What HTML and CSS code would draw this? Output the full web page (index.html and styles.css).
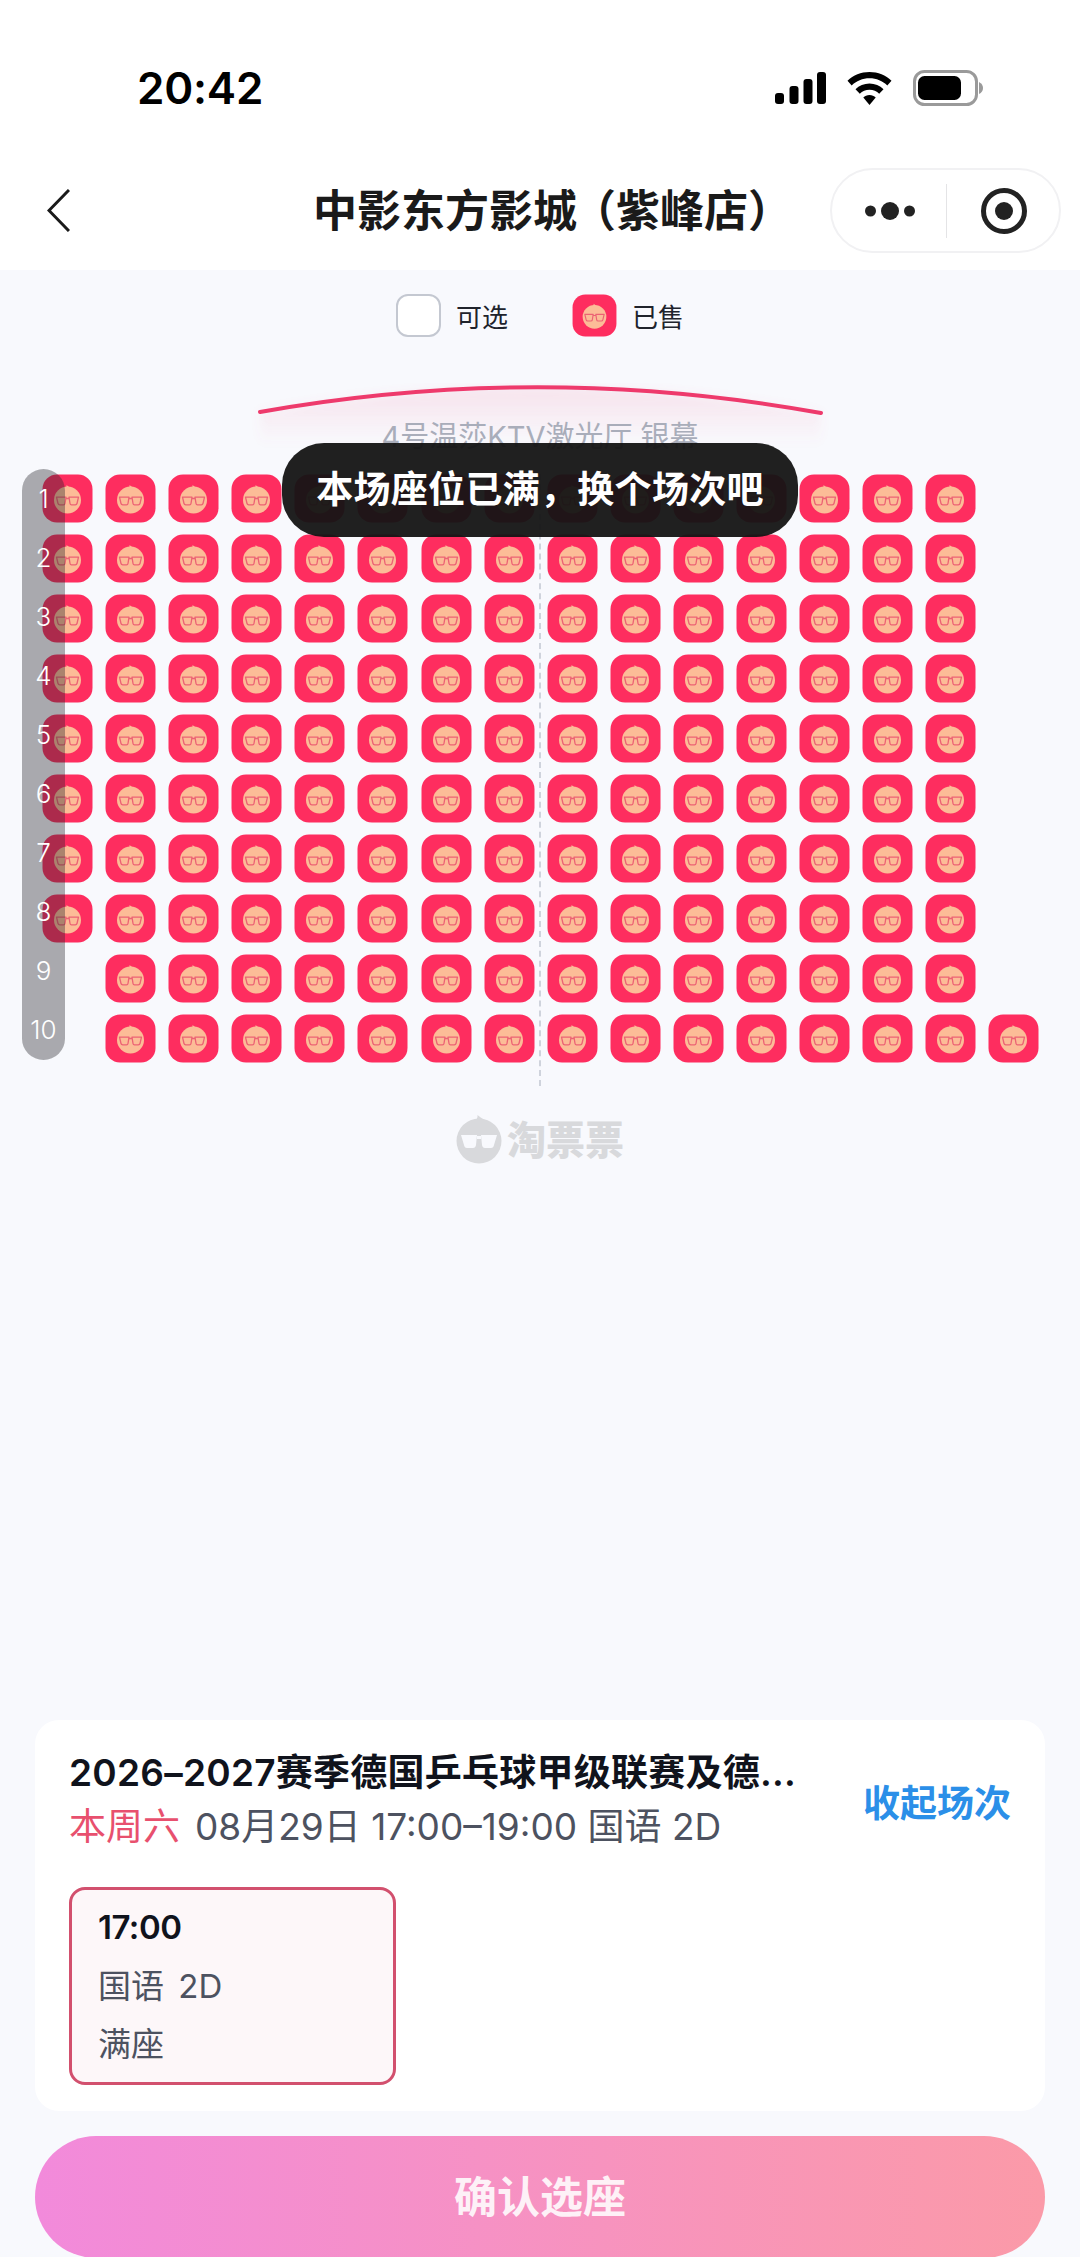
FILE: index.html
```html
<!DOCTYPE html>
<html lang="zh-CN">
<head>
<meta charset="utf-8">
<title>选座</title>
<link rel="stylesheet" href="styles.css">
</head>
<body>
<svg class="defs" aria-hidden="true">
  <defs>
    <symbol id="s" viewBox="0 0 51 49">
      <rect x="0.5" y="0.5" width="50" height="48" rx="14.500" fill="#fe2d5f"/>
      <path d="M20 16C23 15 25 13.500 24.500 11C26.500 12.500 29 14 31 17Z" fill="#fcbc97"/>
      <circle cx="25.500" cy="26" r="13.500" fill="#fcbc97"/>
      <path d="M14.500 23.200H24L23 29.500Q22.800 30.800 21.500 30.800H17.800Q16.300 30.800 16 29.500ZM27 23.200H36.500L35 29.500Q34.700 30.800 33.300 30.800H29.500Q28.200 30.800 28 29.500ZM24 24.500H27" fill="none" stroke="#ec6274" stroke-width="1.300" stroke-linejoin="round"/>
    </symbol>
  </defs>
</svg>
<div class="page">
  <header class="top">
    <div class="status">
      <span class="time">20:42</span>
      <div class="status-icons">
        <svg class="sig" width="51" height="32" viewBox="0 0 51 32"><rect x="0" y="21" width="9" height="11" rx="3"/><rect x="14.500" y="14" width="9" height="18" rx="3"/><rect x="28.500" y="7" width="9" height="25" rx="3"/><rect x="42" y="0" width="9" height="32" rx="3"/></svg>
        <svg class="wifi" width="45" height="33" viewBox="0 0 45 33"><path d="M22.500 0C31 0 38.800 3.300 44.500 8.800L40.300 13.400C35.700 9 29.400 6.300 22.500 6.300S9.300 9 4.700 13.400L.5 8.800C6.200 3.300 14 0 22.500 0Z"/><path d="M22.500 11.500C27.900 11.500 32.900 13.600 36.500 17.200L32.200 21.700C29.700 19.200 26.300 17.700 22.500 17.700S15.300 19.200 12.800 21.700L8.500 17.200C12.100 13.600 17.100 11.500 22.500 11.500Z"/><path d="M22.500 23C25 23 27.200 24 28.700 25.500L22.500 33L16.300 25.500C17.800 24 20 23 22.500 23Z"/></svg>
        <svg class="batt" width="71" height="36" viewBox="0 0 71 36"><rect x="1.500" y="1.500" width="62" height="33" rx="10" fill="none" stroke="#9a9a9a" stroke-width="3"/><rect x="5" y="6" width="43" height="24" rx="6.500" fill="#000"/><path d="M66 12Q70 14 70 18T66 24Z" fill="#9a9a9a"/></svg>
      </div>
    </div>
    <nav class="nav">
      <svg class="back" width="23" height="43" viewBox="0 0 23 43"><path d="M22 1L2 21.500L22 42" fill="none" stroke="#1a1a1a" stroke-width="3"/></svg>
      <h1 class="title">中影东方影城<span class="paren">（</span>紫峰店）</h1>
      <div class="capsule">
        <svg class="dots" width="50" height="24" viewBox="0 0 50 24"><circle cx="5.500" cy="12" r="5.500"/><circle cx="25" cy="12" r="9"/><circle cx="44.500" cy="12" r="5.500"/></svg>
        <span class="capsule-line"></span>
        <svg class="record" width="46" height="46" viewBox="0 0 46 46"><circle cx="23" cy="23" r="20.500" fill="none" stroke="#222" stroke-width="5"/><circle cx="23" cy="23" r="9" fill="#222"/></svg>
      </div>
    </nav>
  </header>

  <div class="legend">
    <div class="legend-item"><span class="free"></span><span>可选</span></div>
    <div class="legend-item"><svg class="legend-seat"><use href="#s"/></svg><span>已售</span></div>
  </div>

  <div class="screen">
    <svg class="screen-art" width="620" height="91" viewBox="0 0 620 91">
      <defs>
        <linearGradient id="glow" x1="0" y1="0" x2="0" y2="1"><stop offset="0" stop-color="#f06a90" stop-opacity=".16"/><stop offset="1" stop-color="#f06a90" stop-opacity="0"/></linearGradient>
        <filter id="soft" x="-5%" y="-20%" width="110%" height="140%"><feGaussianBlur stdDeviation="5"/></filter>
      </defs>
      <path d="M30 29Q310 -21 591 30V62H30Z" fill="url(#glow)" filter="url(#soft)"/>
      <path d="M30 29Q310 -21 591 30" fill="none" stroke="#ee3a6c" stroke-width="4" stroke-linecap="round"/>
    </svg>
    <div class="screen-label">4号温莎KTV激光厅 银幕</div>
  </div>

  <section class="hall">
    <span class="axis"></span>
    <div class="row"><svg class="seat"><use href="#s"/></svg><svg class="seat"><use href="#s"/></svg><svg class="seat"><use href="#s"/></svg><svg class="seat"><use href="#s"/></svg><svg class="seat"><use href="#s"/></svg><svg class="seat"><use href="#s"/></svg><svg class="seat"><use href="#s"/></svg><svg class="seat"><use href="#s"/></svg><svg class="seat"><use href="#s"/></svg><svg class="seat"><use href="#s"/></svg><svg class="seat"><use href="#s"/></svg><svg class="seat"><use href="#s"/></svg><svg class="seat"><use href="#s"/></svg><svg class="seat"><use href="#s"/></svg><svg class="seat"><use href="#s"/></svg></div>
    <div class="row"><svg class="seat"><use href="#s"/></svg><svg class="seat"><use href="#s"/></svg><svg class="seat"><use href="#s"/></svg><svg class="seat"><use href="#s"/></svg><svg class="seat"><use href="#s"/></svg><svg class="seat"><use href="#s"/></svg><svg class="seat"><use href="#s"/></svg><svg class="seat"><use href="#s"/></svg><svg class="seat"><use href="#s"/></svg><svg class="seat"><use href="#s"/></svg><svg class="seat"><use href="#s"/></svg><svg class="seat"><use href="#s"/></svg><svg class="seat"><use href="#s"/></svg><svg class="seat"><use href="#s"/></svg><svg class="seat"><use href="#s"/></svg></div>
    <div class="row"><svg class="seat"><use href="#s"/></svg><svg class="seat"><use href="#s"/></svg><svg class="seat"><use href="#s"/></svg><svg class="seat"><use href="#s"/></svg><svg class="seat"><use href="#s"/></svg><svg class="seat"><use href="#s"/></svg><svg class="seat"><use href="#s"/></svg><svg class="seat"><use href="#s"/></svg><svg class="seat"><use href="#s"/></svg><svg class="seat"><use href="#s"/></svg><svg class="seat"><use href="#s"/></svg><svg class="seat"><use href="#s"/></svg><svg class="seat"><use href="#s"/></svg><svg class="seat"><use href="#s"/></svg><svg class="seat"><use href="#s"/></svg></div>
    <div class="row"><svg class="seat"><use href="#s"/></svg><svg class="seat"><use href="#s"/></svg><svg class="seat"><use href="#s"/></svg><svg class="seat"><use href="#s"/></svg><svg class="seat"><use href="#s"/></svg><svg class="seat"><use href="#s"/></svg><svg class="seat"><use href="#s"/></svg><svg class="seat"><use href="#s"/></svg><svg class="seat"><use href="#s"/></svg><svg class="seat"><use href="#s"/></svg><svg class="seat"><use href="#s"/></svg><svg class="seat"><use href="#s"/></svg><svg class="seat"><use href="#s"/></svg><svg class="seat"><use href="#s"/></svg><svg class="seat"><use href="#s"/></svg></div>
    <div class="row"><svg class="seat"><use href="#s"/></svg><svg class="seat"><use href="#s"/></svg><svg class="seat"><use href="#s"/></svg><svg class="seat"><use href="#s"/></svg><svg class="seat"><use href="#s"/></svg><svg class="seat"><use href="#s"/></svg><svg class="seat"><use href="#s"/></svg><svg class="seat"><use href="#s"/></svg><svg class="seat"><use href="#s"/></svg><svg class="seat"><use href="#s"/></svg><svg class="seat"><use href="#s"/></svg><svg class="seat"><use href="#s"/></svg><svg class="seat"><use href="#s"/></svg><svg class="seat"><use href="#s"/></svg><svg class="seat"><use href="#s"/></svg></div>
    <div class="row"><svg class="seat"><use href="#s"/></svg><svg class="seat"><use href="#s"/></svg><svg class="seat"><use href="#s"/></svg><svg class="seat"><use href="#s"/></svg><svg class="seat"><use href="#s"/></svg><svg class="seat"><use href="#s"/></svg><svg class="seat"><use href="#s"/></svg><svg class="seat"><use href="#s"/></svg><svg class="seat"><use href="#s"/></svg><svg class="seat"><use href="#s"/></svg><svg class="seat"><use href="#s"/></svg><svg class="seat"><use href="#s"/></svg><svg class="seat"><use href="#s"/></svg><svg class="seat"><use href="#s"/></svg><svg class="seat"><use href="#s"/></svg></div>
    <div class="row"><svg class="seat"><use href="#s"/></svg><svg class="seat"><use href="#s"/></svg><svg class="seat"><use href="#s"/></svg><svg class="seat"><use href="#s"/></svg><svg class="seat"><use href="#s"/></svg><svg class="seat"><use href="#s"/></svg><svg class="seat"><use href="#s"/></svg><svg class="seat"><use href="#s"/></svg><svg class="seat"><use href="#s"/></svg><svg class="seat"><use href="#s"/></svg><svg class="seat"><use href="#s"/></svg><svg class="seat"><use href="#s"/></svg><svg class="seat"><use href="#s"/></svg><svg class="seat"><use href="#s"/></svg><svg class="seat"><use href="#s"/></svg></div>
    <div class="row"><svg class="seat"><use href="#s"/></svg><svg class="seat"><use href="#s"/></svg><svg class="seat"><use href="#s"/></svg><svg class="seat"><use href="#s"/></svg><svg class="seat"><use href="#s"/></svg><svg class="seat"><use href="#s"/></svg><svg class="seat"><use href="#s"/></svg><svg class="seat"><use href="#s"/></svg><svg class="seat"><use href="#s"/></svg><svg class="seat"><use href="#s"/></svg><svg class="seat"><use href="#s"/></svg><svg class="seat"><use href="#s"/></svg><svg class="seat"><use href="#s"/></svg><svg class="seat"><use href="#s"/></svg><svg class="seat"><use href="#s"/></svg></div>
    <div class="row row-indent"><svg class="seat"><use href="#s"/></svg><svg class="seat"><use href="#s"/></svg><svg class="seat"><use href="#s"/></svg><svg class="seat"><use href="#s"/></svg><svg class="seat"><use href="#s"/></svg><svg class="seat"><use href="#s"/></svg><svg class="seat"><use href="#s"/></svg><svg class="seat"><use href="#s"/></svg><svg class="seat"><use href="#s"/></svg><svg class="seat"><use href="#s"/></svg><svg class="seat"><use href="#s"/></svg><svg class="seat"><use href="#s"/></svg><svg class="seat"><use href="#s"/></svg><svg class="seat"><use href="#s"/></svg></div>
    <div class="row row-indent"><svg class="seat"><use href="#s"/></svg><svg class="seat"><use href="#s"/></svg><svg class="seat"><use href="#s"/></svg><svg class="seat"><use href="#s"/></svg><svg class="seat"><use href="#s"/></svg><svg class="seat"><use href="#s"/></svg><svg class="seat"><use href="#s"/></svg><svg class="seat"><use href="#s"/></svg><svg class="seat"><use href="#s"/></svg><svg class="seat"><use href="#s"/></svg><svg class="seat"><use href="#s"/></svg><svg class="seat"><use href="#s"/></svg><svg class="seat"><use href="#s"/></svg><svg class="seat"><use href="#s"/></svg><svg class="seat"><use href="#s"/></svg></div>
    <div class="row-bar"><span>1</span><span>2</span><span>3</span><span>4</span><span>5</span><span>6</span><span>7</span><span>8</span><span>9</span><span>10</span></div>
    <div class="toast">本场座位已满，换个场次吧</div>
  </section>

  <div class="brand">
    <svg class="brand-logo" width="46" height="49" viewBox="0 0 46 49"><path d="M15 8C19 7 22 4 21.500 0C25 3 30 5.500 33 9Z" fill="#d8d9dc"/><circle cx="23" cy="26" r="22.500" fill="#d8d9dc"/><path d="M5 20H21L20 30Q19.500 33 17 33H11Q8.500 33 8 30ZM25 20H41L38 30Q37.500 33 35 33H29Q26.500 33 26 30Z" fill="#f8f9fd"/><path d="M21 21H25V24H21Z" fill="#f8f9fd"/></svg>
    <span class="brand-name">淘票票</span>
  </div>

  <section class="bottom">
    <div class="card">
      <div class="card-head">
        <div>
          <div class="show-title">2026–2027赛季德国乒乓球甲级联赛及德...</div>
          <div class="show-sub"><span class="day">本周六</span><span>08月29日 17:00–19:00 国语 2D</span></div>
        </div>
        <div class="toggle">收起场次</div>
      </div>
      <div class="session">
        <div class="session-time">17:00</div>
        <div class="session-line">国语 2D</div>
        <div>满座</div>
      </div>
    </div>
    <div class="confirm">确认选座</div>
  </section>
</div>
</body>
</html>
```
FILE: styles.css
```css
* { box-sizing: border-box; }
html, body { margin: 0; padding: 0; }
body {
  width: 1080px;
  height: 2257px;
  overflow: hidden;
  background: #f8f9fd;
  font-family: Inter, "Noto Sans CJK SC", sans-serif;
  color: #1a1d26;
}
.defs { position: absolute; width: 0; height: 0; }
.page { width: 1080px; height: 2257px; overflow: hidden; }

.top { background: #fff; height: 270px; }
.status {
  height: 168px;
  padding: 8px 96px 0 137px;
  display: flex;
  align-items: center;
  justify-content: space-between;
}
.time { font-size: 44px; font-weight: 600; color: #000; line-height: 1; letter-spacing: -.2px; }
.status-icons { display: flex; align-items: center; gap: 21px; }
.sig, .wifi { fill: #000; display: block; }
.batt { display: block; }

.nav {
  height: 85px;
  padding: 0 19px 0 47px;
  display: flex;
  align-items: center;
}
.back { display: block; flex: none; }
.title {
  margin: 0 0 0 243px;
  font-size: 44px;
  font-weight: 600;
  line-height: 60px;
  color: #1a1a1a;
  white-space: nowrap;
}
.paren { margin-left: -5px; }
.capsule {
  margin-left: auto;
  width: 231px;
  height: 85px;
  border: 2px solid #f1f1f3;
  border-radius: 43px;
  background: #fff;
  display: flex;
  align-items: center;
  padding-left: 33px;
}
.dots { fill: #222; display: block; flex: none; }
.capsule-line { width: 1px; height: 54px; background: #e4e4e6; margin-left: 31px; flex: none; }
.record { display: block; margin-left: 34px; flex: none; }

.legend {
  margin-top: 24px;
  height: 43px;
  display: flex;
  justify-content: center;
  gap: 64px;
  font-size: 26px;
  color: #20232c;
}
.legend-item { display: flex; align-items: center; gap: 15px; }
.free { width: 45px; height: 43px; background: #fff; border: 2px solid #c4c8d1; border-radius: 12px; }
.legend-seat { width: 45px; height: 43px; display: block; }

.screen { margin-top: 46px; height: 91px; position: relative; padding-top: 35px; }
.screen-art { position: absolute; left: 230px; top: 0; }
.screen-label {
  position: relative;
  font-size: 29px;
  line-height: 38px;
  text-align: center;
  color: #a9adba;
}

.hall {
  position: relative;
  padding-left: 42px;
  display: flex;
  flex-direction: column;
  gap: 11px;
}
.row { display: flex; gap: 12.1px; }
.row-indent { padding-left: 63.1px; }
.seat { width: 51px; height: 49px; display: block; flex: none; }
.axis {
  position: absolute;
  left: 539px;
  top: 0;
  height: 612px;
  border-left: 2px dashed #cfd3dc;
}
.row-bar {
  position: absolute;
  left: 22px;
  top: -5px;
  width: 43px;
  height: 591px;
  border-radius: 22px;
  background: rgba(40, 40, 44, .38);
  color: #fff;
  font-size: 26px;
  font-weight: 300;
  display: flex;
  flex-direction: column;
  align-items: center;
}
.row-bar span { height: 59px; line-height: 59px; }
.toast {
  position: absolute;
  left: 282px;
  top: -31px;
  width: 516px;
  height: 94px;
  border-radius: 42px;
  background: rgba(20, 20, 20, .95);
  color: #fff;
  font-size: 37px;
  font-weight: 600;
  line-height: 94px;
  text-align: center;
  letter-spacing: .3px;
}

.brand {
  margin-top: 52px;
  display: flex;
  justify-content: center;
  align-items: center;
  gap: 5px;
}
.brand-logo { display: block; }
.brand-name { font-size: 39px; font-weight: 900; color: #d8d9dc; line-height: 48px; }

.bottom { margin-top: 556px; padding: 0 35px; }
.card {
  height: 391px;
  background: #fff;
  border-radius: 24px;
  padding: 28px 34px 0 34px;
}
.card-head { display: flex; justify-content: space-between; align-items: center; }
.show-title { font-size: 37px; font-weight: 600; line-height: 50px; color: #10131c; white-space: nowrap; letter-spacing: .25px; }
.show-sub { font-size: 37px; line-height: 54px; color: #4d5260; display: flex; gap: 15px; margin-top: 2px; }
.day { color: #e8506e; }
.toggle { font-size: 37px; font-weight: 600; color: #2b8fe8; white-space: nowrap; }
.session {
  margin-top: 33px;
  width: 327px;
  height: 198px;
  border: 3px solid #d2506e;
  border-radius: 16px;
  background: #fdf7f9;
  padding: 8px 0 0 26px;
  font-size: 33px;
  line-height: 58.5px;
  color: #4d5260;
}
.session-time { font-weight: 600; color: #10131c; letter-spacing: -.5px; }
.session-line { word-spacing: 5px; }
.confirm {
  margin-top: 25px;
  height: 122px;
  border-radius: 61px;
  background: linear-gradient(90deg, #f28adb, #fb9aa8);
  color: rgba(255, 255, 255, .88);
  font-size: 43px;
  font-weight: 600;
  line-height: 122px;
  text-align: center;
}
```
